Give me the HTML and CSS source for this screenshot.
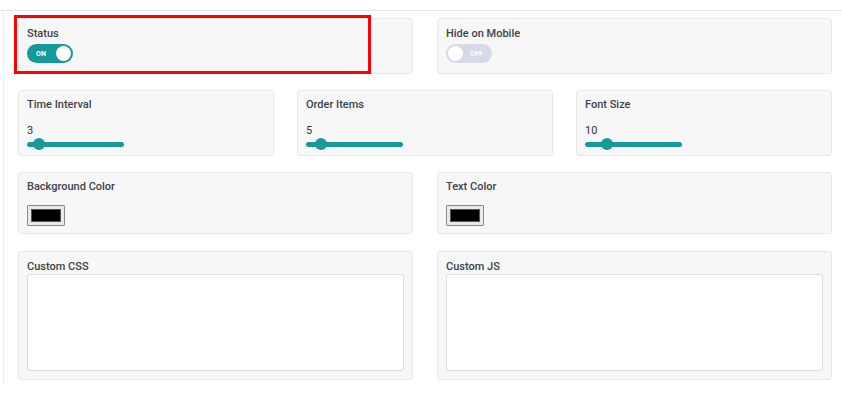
FILE: index.html
```html
<!DOCTYPE html>
<html lang="en">
<head>
    <meta charset="UTF-8">
    <title>Widget Settings</title>
    <link rel="stylesheet" href="styles.css">
</head>
<body>
    <div class="panel">
        <div class="inner">
            <div class="row two">
                <div class="card status-card">
                    <label>Status</label>
                    <div class="toggle on"><span class="toggle-text">ON</span><span class="knob"></span></div>
                    <div class="highlight"></div>
                </div>
                <div class="card">
                    <label>Hide on Mobile</label>
                    <div class="toggle off"><span class="knob"></span><span class="toggle-text">OFF</span></div>
                </div>
            </div>

            <div class="row three">
                <div class="card slider-card">
                    <label>Time Interval</label>
                    <div class="value">3</div>
                    <input type="range" class="range" min="1" max="30" value="3">
                </div>
                <div class="card slider-card">
                    <label>Order Items</label>
                    <div class="value">5</div>
                    <input type="range" class="range" min="1" max="40" value="5">
                </div>
                <div class="card slider-card">
                    <label>Font Size</label>
                    <div class="value">10</div>
                    <input type="range" class="range" min="1" max="50" value="10">
                </div>
            </div>

            <div class="row two">
                <div class="card color-card">
                    <label>Background Color</label>
                    <div class="swatch"><span></span></div>
                </div>
                <div class="card color-card">
                    <label>Text Color</label>
                    <div class="swatch"><span></span></div>
                </div>
            </div>

            <div class="row two code-row">
                <div class="card code-card">
                    <label>Custom CSS</label>
                    <textarea></textarea>
                </div>
                <div class="card code-card">
                    <label>Custom JS</label>
                    <textarea></textarea>
                </div>
            </div>
        </div>
    </div>
</body>
</html>
```

FILE: styles.css
```css
* {
    box-sizing: border-box;
}
body {
    margin: 0;
    background: #fff;
    font-family: Roboto, 'Liberation Sans', sans-serif;
    color: #3c434a;
}
.panel {
    margin-top: 10px;
    border-top: 1px solid #e4e4e4;
}
.inner {
    margin-left: 3px;
    border-left: 1px solid #ececec;
    padding: 7px 10px 0 14px;
    height: 372px;
    display: grid;
    grid-template-rows: 56px 66px 62px 130px;
    align-content: start;
    row-gap: 16px;
}
.row {
    display: grid;
}
.row.two {
    grid-template-columns: 1fr 1fr;
    gap: 24px;
}
.row.three {
    grid-template-columns: 1fr 1fr 1fr;
    gap: 23px;
}
.code-row {
    margin-top: 1px;
}
.card {
    position: relative;
    background-color: #f7f7f7;
    border: 1px solid #e8e8e8;
    border-radius: 3px;
    padding: 8px 8px 0;
}
label {
    display: block;
    font-size: 11px;
    line-height: 13px;
    font-weight: 500;
    color: #3c434a;
}

/* toggles */
.toggle {
    margin-top: 4px;
    width: 46px;
    height: 19px;
    border-radius: 10px;
    display: flex;
    align-items: center;
    justify-content: space-between;
    padding: 0 2px 0 9px;
}
.toggle.on {
    background-color: #17999b;
}
.toggle.off {
    background-color: #d7d9ea;
    padding: 0 9px 0 2px;
}
.toggle-text {
    color: #fff;
    font-size: 7px;
    font-weight: 700;
    letter-spacing: 0.2px;
}
.knob {
    width: 15px;
    height: 15px;
    border-radius: 50%;
    background: #fff;
}
.status-card .highlight {
    position: absolute;
    left: -5px;
    top: -4px;
    width: 357px;
    height: 59px;
    border: 3px solid #ff0000;
}

/* sliders */
.slider-card {
    padding-top: 7px;
}
.value {
    margin-top: 13px;
    font-size: 11px;
    line-height: 13px;
    color: #333;
}
.range {
    -webkit-appearance: none;
    appearance: none;
    display: block;
    width: 97px;
    height: 12px;
    margin: 1px 0 0;
    background: transparent;
}
.range::-webkit-slider-runnable-track {
    height: 5px;
    border-radius: 3px;
    background: #17999b;
}
.range::-webkit-slider-thumb {
    -webkit-appearance: none;
    width: 12px;
    height: 12px;
    margin-top: -3.5px;
    border-radius: 50%;
    background: #17999b;
}

/* colors */
.color-card {
    padding-top: 7px;
}
.swatch {
    margin-top: 12px;
    width: 38px;
    height: 21px;
    border: 1px solid #8a8a8a;
    background: #e9e9e9;
    padding: 3px 3px;
    border-radius: 1px;
}
.swatch span {
    display: block;
    height: 100%;
    background: #000;
    border: 1px solid #555;
}

/* code areas */
textarea {
    display: block;
    width: 100%;
    height: 97px;
    margin-top: 1px;
    border: 1px solid #dcdcdc;
    border-radius: 3px;
    background: #fff;
    resize: none;
}
```
